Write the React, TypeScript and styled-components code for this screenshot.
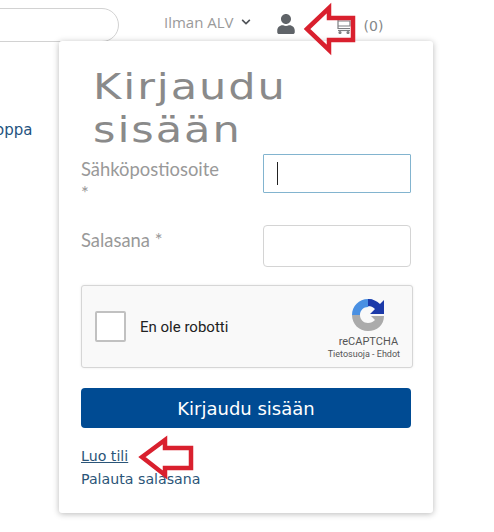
import React from "react";
import styled, { createGlobalStyle } from "styled-components";
import { FaUser, FaChevronDown } from "react-icons/fa";

const GlobalStyle = createGlobalStyle`
  html, body {
    margin: 0;
    background: #fff;
    overflow: hidden;
  }
  * {
    box-sizing: border-box;
  }
`;

const Page = styled.div`
  position: relative;
  width: 494px;
  height: 532px;
  overflow: hidden;
  font-family: "Open Sans", "Liberation Sans", sans-serif;
`;

const Header = styled.header`
  display: flex;
  align-items: center;
  height: 41px;
  padding-top: 8px;
`;

const Search = styled.div`
  width: 159px;
  height: 34px;
  margin-left: -40px;
  border: 1px solid #d2d2d2;
  border-radius: 17px;
`;

const VatToggle = styled.div`
  display: flex;
  align-items: center;
  gap: 7px;
  margin-left: 45px;
  margin-top: -6px;
  font-size: 15px;
  color: #9a9a9a;
  svg {
    color: #4f5358;
    font-size: 10px;
  }
`;

const UserIcon = styled(FaUser)`
  margin-left: 25px;
  margin-top: -1px;
  color: #5f6368;
  font-size: 20px;
`;

const CartIcon = styled.svg`
  margin-left: 39px;
  margin-top: 1px;
  flex: none;
`;

const CartCount = styled.span`
  margin-left: 12px;
  margin-top: 2px;
  font-family: "DejaVu Sans", sans-serif;
  font-size: 14px;
  color: #85878a;
`;

const Main = styled.main`
  display: flex;
`;

const SideNav = styled.nav`
  width: 59px;
  padding-top: 79px;
  text-indent: -5px;
  font-family: "DejaVu Sans", sans-serif;
  font-size: 15px;
  line-height: 20px;
  color: #1f5380;
`;

const Card = styled.section`
  width: 374px;
  height: 472px;
  padding: 25px 22px 0;
  background: #fff;
  border-radius: 3px;
  box-shadow: 0 1px 6px rgba(0, 0, 0, 0.28);
`;

const Title = styled.h1`
  margin: 0 0 2px 12px;
  font-family: "DejaVu Sans", sans-serif;
  font-size: 35px;
  font-weight: 400;
  line-height: 43px;
  letter-spacing: 1.6px;
  color: #8a8a8a;
  transform: scaleX(1.23);
  transform-origin: left center;
`;

const Field = styled.div`
  display: grid;
  grid-template-columns: 182px 148px;
  margin-bottom: ${(p: { $gap: number }) => p.$gap}px;
`;

const Label = styled.label`
  width: 145px;
  padding-top: 3px;
  font-family: "Lato", sans-serif;
  font-size: 18.4px;
  line-height: 24px;
  color: #999;
`;

const Input = styled.div<{ $focus?: boolean }>`
  display: flex;
  align-items: center;
  height: ${(p) => (p.$focus ? 39 : 42)}px;
  padding-left: 13px;
  border: 1px solid ${(p) => (p.$focus ? "#82b4cf" : "#d4d4d4")};
  border-radius: ${(p) => (p.$focus ? 1 : 4)}px;
`;

const Caret = styled.span`
  width: 1px;
  height: 23px;
  background: #222;
`;

const Captcha = styled.div`
  display: flex;
  align-items: center;
  justify-content: space-between;
  width: 332px;
  height: 83px;
  padding: 0 12px 0 13px;
  background: #f9f9f9;
  border: 1px solid #d6d6d6;
  border-radius: 3px;
  box-shadow: 0 0 3px rgba(0, 0, 0, 0.08);
`;

const CaptchaCheck = styled.div`
  display: flex;
  align-items: center;
  gap: 14px;
  font-family: "Roboto", sans-serif;
  font-size: 15px;
  color: #222;
`;

const CheckBox = styled.span`
  width: 31px;
  height: 31px;
  background: #fff;
  border: 2px solid #c1c1c1;
  border-radius: 2px;
`;

const CaptchaBrand = styled.div`
  display: flex;
  flex-direction: column;
  align-items: center;
  margin-top: 5px;
  font-family: "Roboto", sans-serif;
  color: #555;
  svg {
    margin-left: 9px;
  }
`;

const BrandName = styled.span`
  margin-top: 3px;
  margin-left: 9px;
  font-size: 11px;
  line-height: 13px;
`;

const BrandLinks = styled.span`
  font-size: 9px;
  line-height: 12px;
`;

const SubmitButton = styled.button`
  display: block;
  width: 330px;
  height: 40px;
  margin-top: 20px;
  padding: 0;
  border: none;
  border-radius: 4px;
  background: #004b93;
  color: #fff;
  font-family: "DejaVu Sans", sans-serif;
  font-size: 18px;
`;

const Links = styled.div`
  display: flex;
  flex-direction: column;
  align-items: flex-start;
  margin-top: 17px;
  font-family: "DejaVu Sans", sans-serif;
  font-size: 14.2px;
  line-height: 23px;
  color: #2b5578;
`;

const Link = styled.a<{ $underline?: boolean }>`
  text-decoration: ${(p) => (p.$underline ? "underline" : "none")};
`;

const Arrow = styled.svg<{ $x: number; $y: number }>`
  position: absolute;
  left: ${(p) => p.$x}px;
  top: ${(p) => p.$y}px;
  fill: none;
  stroke: #d9202e;
  stroke-width: 4.5;
  stroke-linejoin: miter;
`;

function App() {
  return (
    <Page>
      <GlobalStyle />
      <Header>
        <Search />
        <VatToggle>
          Ilman ALV <FaChevronDown />
        </VatToggle>
        <UserIcon />
        <CartIcon width="17" height="17" viewBox="0 0 17 17" fill="none" stroke="#7d7f82" strokeWidth="1.2">
          <path d="M3 1v10.5h12M3 4h12v5H3" />
          <path d="M3 13.5h12" />
          <circle cx="5" cy="15.5" r="1" fill="#7d7f82" />
          <circle cx="13" cy="15.5" r="1" fill="#7d7f82" />
        </CartIcon>
        <CartCount>(0)</CartCount>
      </Header>
      <Main>
        <SideNav>oppa</SideNav>
        <Card>
          <Title>
            Kirjaudu
            <br />
            sisään
          </Title>
          <Field $gap={20}>
            <Label>Sähköpostiosoite *</Label>
            <Input $focus>
              <Caret />
            </Input>
          </Field>
          <Field $gap={18}>
            <Label>Salasana *</Label>
            <Input />
          </Field>
          <Captcha>
            <CaptchaCheck>
              <CheckBox />
              En ole robotti
            </CaptchaCheck>
            <CaptchaBrand>
              <svg width="34" height="34" viewBox="0 0 34 34">
                <path d="M1 17C1 8 8 1 17 1c2 0 4 .4 6 1.300L17 9c-4.500 0-8 3.500-8 8z" fill="#4a90e2" />
                <path d="M17 1c5 0 9 2 12 5l4-4v14H19l5-5c-2-2-4-3-7-3z" fill="#1c3aa9" />
                <path d="M1 17h8c0 4.500 3.500 8 8 8 3 0 5-1 7-3l-4-4h13c0 9-7 15-16 15C8 33 1 26 1 17z" fill="#ababab" />
              </svg>
              <BrandName>reCAPTCHA</BrandName>
              <BrandLinks>Tietosuoja - Ehdot</BrandLinks>
            </CaptchaBrand>
          </Captcha>
          <SubmitButton>Kirjaudu sisään</SubmitButton>
          <Links>
            <Link $underline>Luo tili</Link>
            <Link>Palauta salasana</Link>
          </Links>
        </Card>
      </Main>
      <Arrow $x={300} $y={0} width="60" height="56">
        <path d="M7 29 L29 8 V18 H53 V40 H29 V50 Z" />
      </Arrow>
      <Arrow $x={135} $y={434} width="62" height="46">
        <path d="M7 23 L30 6 V14 H56 V34 H30 V41 Z" />
      </Arrow>
    </Page>
  );
}

export default App;
